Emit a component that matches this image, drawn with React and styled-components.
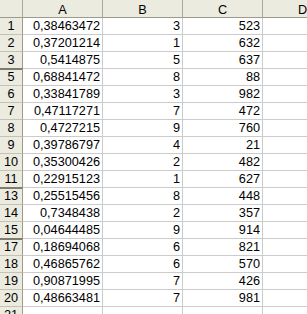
import React from "react";
import styled, { createGlobalStyle } from "styled-components";

const Global = createGlobalStyle`
  html, body { margin: 0; padding: 0; background: #ffffff; }
  body { width: 307px; height: 314px; overflow: hidden; }
`;

const Sheet = styled.div`
  display: grid;
  grid-template-columns: 23px repeat(4, 80px);
  grid-auto-rows: 17px;
  grid-template-rows: 18px;
  width: 343px;
  font-family: "Liberation Sans", Arial, sans-serif;
  font-size: 12.7px;
  color: #000;
  background: #fff;
  -webkit-font-smoothing: none;
`;

const ColHead = styled.div`
  box-sizing: border-box;
  background: #ecebe0;
  border-right: 1px solid #aca899;
  border-bottom: 1px solid #9d9a8c;
  text-align: center;
  padding-top: 4px;
  line-height: 13px;
  overflow: hidden;
`;

const RowHead = styled.div`
  box-sizing: border-box;
  background: #ecebe0;
  border-right: 1px solid #9d9a8c;
  border-bottom: 1px solid ${(p) => (p.$beforeHidden ? "#7e7b6f" : "#c5c2b4")};
  box-shadow: ${(p) => (p.$afterHidden ? "inset 0 1px 0 #7e7b6f" : "none")};
  text-align: center;
  line-height: 16px;
  overflow: hidden;
`;

const Cell = styled.div`
  box-sizing: border-box;
  border-right: 1px solid #cbcbcb;
  border-bottom: 1px solid #cbcbcb;
  text-align: right;
  padding-right: 2px;
  line-height: 16px;
  white-space: nowrap;
  overflow: hidden;
`;

const rows = [
  [1, "0,38463472", 3, 523],
  [2, "0,37201214", 1, 632],
  [3, "0,5414875", 5, 637],
  [5, "0,68841472", 8, 88],
  [6, "0,33841789", 3, 982],
  [7, "0,47117271", 7, 472],
  [8, "0,4727215", 9, 760],
  [9, "0,39786797", 4, 21],
  [10, "0,35300426", 2, 482],
  [11, "0,22915123", 1, 627],
  [13, "0,25515456", 8, 448],
  [14, "0,7348438", 2, 357],
  [15, "0,04644485", 9, 914],
  [17, "0,18694068", 6, 821],
  [18, "0,46865762", 6, 570],
  [19, "0,90871995", 7, 426],
  [20, "0,48663481", 7, 981],
  [21, "", "", ""],
];

export default function App() {
  return (
    <>
      <Global />
      <Sheet>
        <ColHead />
        <ColHead>A</ColHead>
        <ColHead>B</ColHead>
        <ColHead>C</ColHead>
        <ColHead>D</ColHead>
        {rows.map((r, i) => {
          const next = rows[i + 1];
          const prev = rows[i - 1];
          const beforeHidden = next && next[0] !== r[0] + 1;
          const afterHidden = prev && prev[0] !== r[0] - 1;
          return (
            <React.Fragment key={r[0]}>
              <RowHead $beforeHidden={beforeHidden} $afterHidden={afterHidden}>
                {r[0]}
              </RowHead>
              <Cell>{r[1]}</Cell>
              <Cell>{r[2]}</Cell>
              <Cell>{r[3]}</Cell>
              <Cell />
            </React.Fragment>
          );
        })}
      </Sheet>
    </>
  );
}
